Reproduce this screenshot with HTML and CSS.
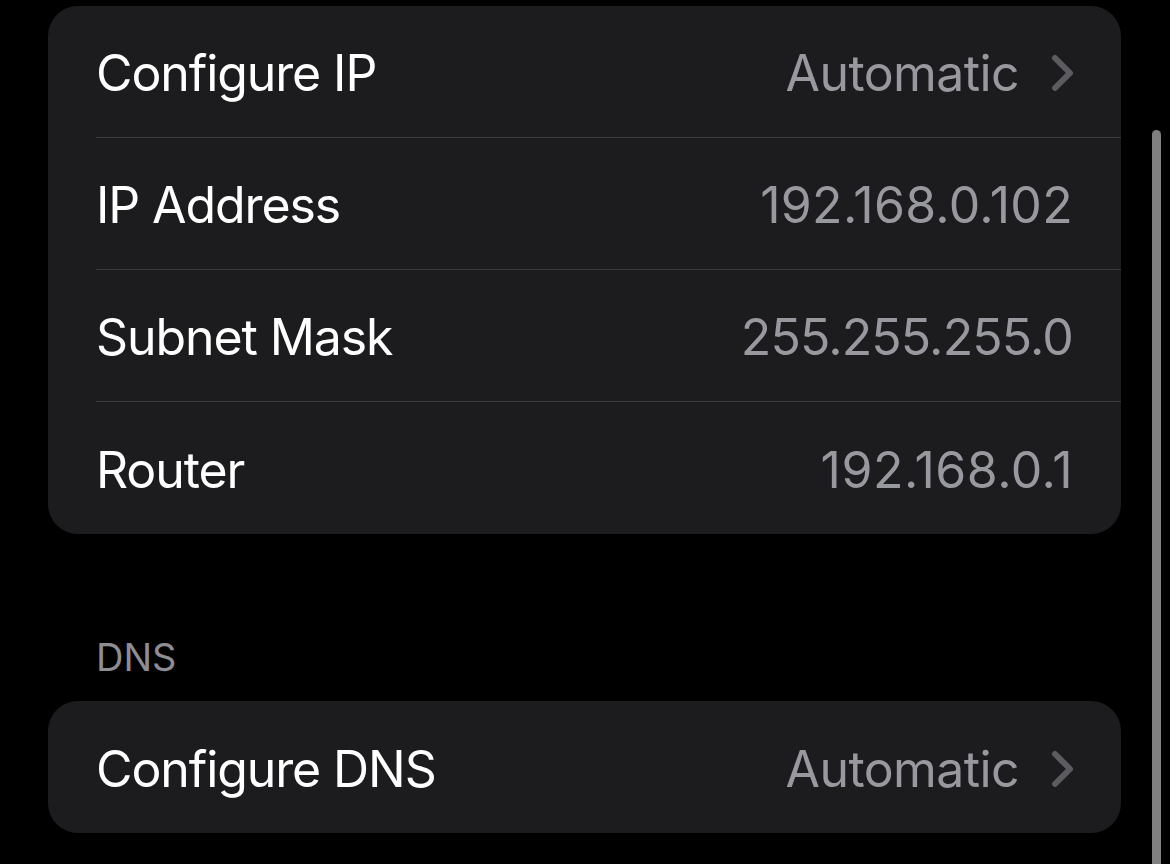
FILE: index.html
```html
<!DOCTYPE html>
<html>
<head>
<meta charset="utf-8">
<link rel="stylesheet" href="styles.css">
</head>
<body>
<div class="page">
  <div class="card">
    <div class="row">
      <div class="row-inner">
        <span class="label">Configure IP</span>
        <span class="value">Automatic</span>
        <svg class="chev" width="24" height="38" viewBox="0 0 24 38"><path d="M4 4 L19 19 L4 34" fill="none" stroke="#5b5b60" stroke-width="6" stroke-linecap="round" stroke-linejoin="round"/></svg>
      </div>
    </div>
    <div class="row">
      <div class="row-inner">
        <span class="label">IP Address</span>
        <span class="value num-ones">192.168.0.102</span>
      </div>
    </div>
    <div class="row">
      <div class="row-inner">
        <span class="label">Subnet Mask</span>
        <span class="value num-tight">255.255.255.0</span>
      </div>
    </div>
    <div class="row">
      <div class="row-inner last">
        <span class="label">Router</span>
        <span class="value num-ones-more">192.168.0.1</span>
      </div>
    </div>
  </div>
  <div class="section-header">DNS</div>
  <div class="card">
    <div class="row">
      <div class="row-inner last">
        <span class="label">Configure DNS</span>
        <span class="value">Automatic</span>
        <svg class="chev" width="24" height="38" viewBox="0 0 24 38"><path d="M4 4 L19 19 L4 34" fill="none" stroke="#5b5b60" stroke-width="6" stroke-linecap="round" stroke-linejoin="round"/></svg>
      </div>
    </div>
  </div>
</div>
<div class="scrollbar"></div>
</body>
</html>
```

FILE: styles.css
```css
html, body {
  margin: 0;
  padding: 0;
  background: #000;
  height: 100%;
  overflow: hidden;
}
body {
  font-family: Inter, "Liberation Sans", sans-serif;
  -webkit-font-smoothing: antialiased;
}
.page {
  display: flex;
  flex-direction: column;
  padding-top: 6px;
  padding-left: 48px;
  width: 1073px;
}
.card {
  background: #1c1c1e;
  border-radius: 30px;
  overflow: hidden;
}
.row {
  padding-left: 48px;
}
.row-inner {
  display: flex;
  align-items: center;
  height: 132px;
  box-sizing: border-box;
  border-bottom: 1px solid #3a3a3c;
  padding-right: 48px;
  padding-top: 3px;
}
.row-inner.last {
  border-bottom: none;
}
.label {
  color: #ffffff;
  font-size: 50px;
  letter-spacing: -1.1px;
  flex: 1;
}
.value {
  color: #98989f;
  font-size: 50px;
  letter-spacing: -0.6px;
}
.value.num-ones {
  letter-spacing: 0.3px;
}
.value.num-ones-more {
  letter-spacing: 0.5px;
}
.value.num-tight {
  letter-spacing: -0.85px;
}
.chev {
  margin-left: 32px;
  margin-right: -2px;
  display: block;
}
.section-header {
  color: #8d8d93;
  font-size: 38px;
  letter-spacing: 0px;
  padding-left: 48px;
  margin-top: 100px;
  height: 67px;
  line-height: 46px;
}
.scrollbar {
  position: absolute;
  left: 1152px;
  top: 130px;
  width: 9px;
  height: 734px;
  border-radius: 4.5px 4.5px 0 0;
  background: #808080;
}
```
